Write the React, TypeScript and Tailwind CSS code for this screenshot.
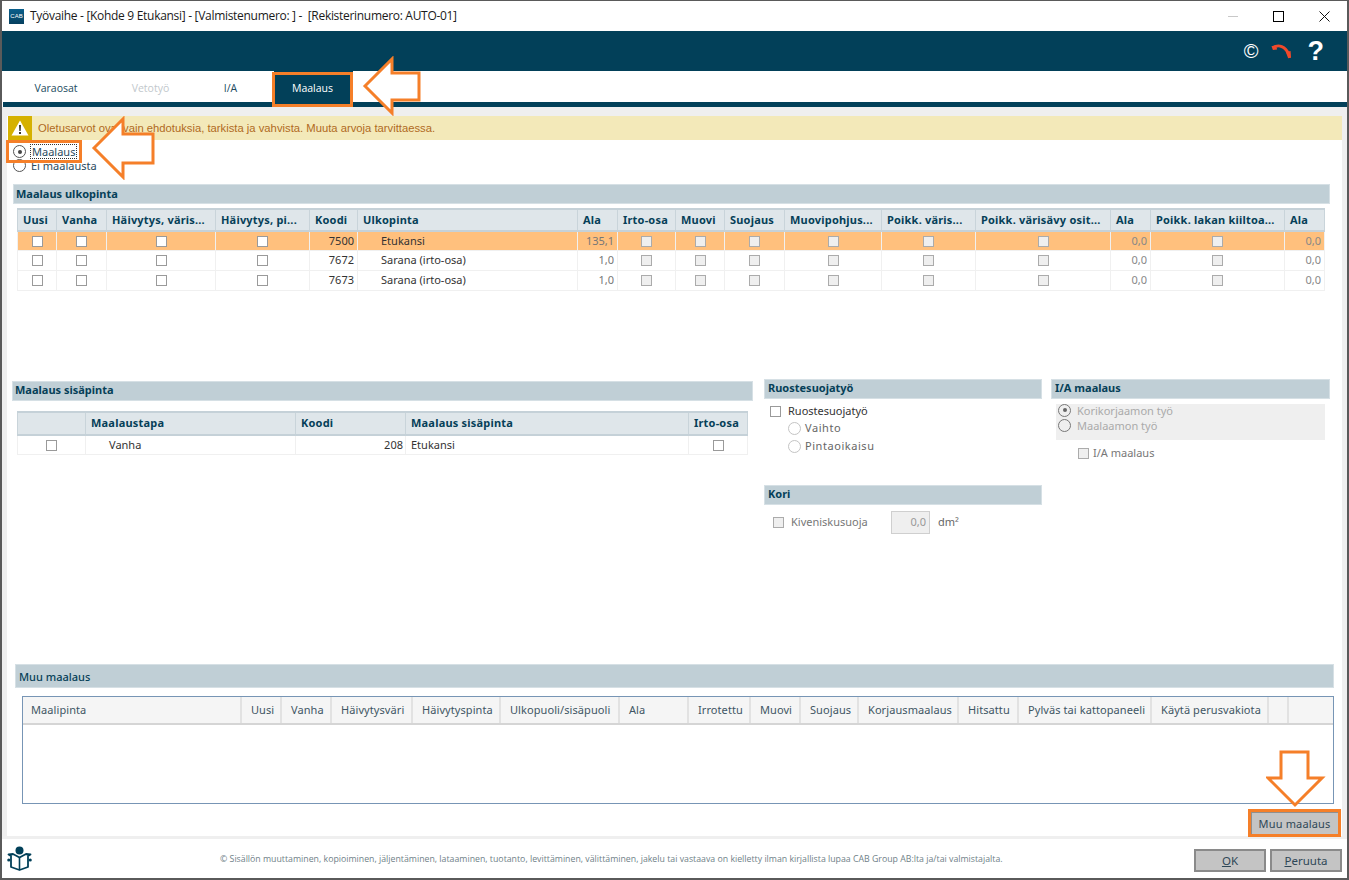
import React from "react";

const F = "font-['Noto_Sans',sans-serif]";

function Check({ disabled = false, cls = "" }: { disabled?: boolean; cls?: string }) {
  return <span className={`inline-block w-[11px] h-[11px] border align-middle ${disabled ? "bg-[#efefef] border-[#ababab]" : "bg-white border-[#9a9a9a]"} ${cls}`} />;
}

function Radio({ on = false, light = false, mid = false }: { on?: boolean; light?: boolean; mid?: boolean }) {
  return (
    <span className={`inline-flex items-center justify-center w-[13px] h-[13px] rounded-full border shrink-0 ${light ? "border-[#c4c4c4] bg-white" : mid ? "border-[#777]" : "border-[#555] bg-white"}`}>
      {on && <span className={`block w-[4px] h-[4px] rounded-full ${mid ? "bg-[#666]" : "bg-[#444]"}`} />}
    </span>
  );
}

function SectionHead({ children, cls = "" }: { children: React.ReactNode; cls?: string }) {
  return (
    <div className={`bg-[#c0cfd6] border border-[#d6e0e5] flex items-center pl-[2px] text-[11px] font-bold text-[#063f58] ${cls}`}>
      {children}
    </div>
  );
}

function Arrow({ cls, w, h, pts }: { cls: string; w: number; h: number; pts: string }) {
  return (
    <svg className={`absolute ${cls}`} width={w} height={h} viewBox={`0 0 ${w} ${h}`}>
      <polygon points={pts} fill="#ffffff" stroke="#f57f29" strokeWidth="3" strokeLinejoin="miter" />
    </svg>
  );
}

const th = "bg-[#dfe6ea] border-x border-x-[#c9d4da] border-y-2 border-y-[#c5d1d8] text-left font-bold text-[#063f58] pl-[5px] whitespace-nowrap overflow-hidden tracking-[0.2px]";
const td = "border border-[#f0f0f0] text-[#333333] p-0 text-center";
const tdn = "border border-[#f0f0f0] text-[#777777] pr-[3px] text-right";

const outerRows = [
  { k: "7500", n: "Etukansi", a: "135,1", hi: true },
  { k: "7672", n: "Sarana (irto-osa)", a: "1,0", hi: false },
  { k: "7673", n: "Sarana (irto-osa)", a: "1,0", hi: false },
];

const muuHead = ["Uusi", "Vanha", "Häivytysväri", "Häivytyspinta", "Ulkopuoli/sisäpuoli", "Ala", "Irrotettu", "Muovi", "Suojaus", "Korjausmaalaus", "Hitsattu", "Pylväs tai kattopaneeli", "Käytä perusvakiota", ""];

export default function App() {
  return (
    <div className={`relative w-[1349px] h-[880px] overflow-hidden bg-white flex flex-col border-x-2 border-b-2 border-t border-[#5a5a5a] ${F}`}>
      {/* title bar */}
      <div className="h-[30px] shrink-0 flex items-center pl-[7px] bg-white">
        <div className="w-[15px] h-[15px] bg-gradient-to-b from-[#0a5f8c] to-[#06405f] text-white text-[6px] leading-[15px] text-center font-['Liberation_Sans',sans-serif]">CAB</div>
        <span className="ml-[6px] text-[12px] text-[#1a1a1a] font-['Open_Sans',sans-serif] whitespace-pre tracking-[-0.3px]">Työvaihe - [Kohde 9 Etukansi] - [Valmistenumero: ] -  [Rekisterinumero: AUTO-01]</span>
        <div className="ml-auto flex items-center">
          <span className="block w-[10px] h-px bg-[#c8c8c8]" />
          <span className="block ml-[35px] w-[11px] h-[11px] border-[1.5px] border-black" />
          <svg className="ml-[35px] mr-[17px]" width="11" height="11" viewBox="0 0 11 11"><path d="M0.5 0.5 L10.5 10.5 M10.5 0.5 L0.5 10.5" stroke="#111" strokeWidth="1" /></svg>
        </div>
      </div>
      {/* blue bar */}
      <div className="h-10 shrink-0 bg-[#024059] flex items-center justify-end">
        <span className="text-white text-[20px] leading-none font-['Liberation_Sans',sans-serif]">©</span>
        <svg className="ml-[12px]" width="21" height="16" viewBox="0 0 22 16">
          <path d="M2 4.5 C8 0.5 15 3 19 12" fill="none" stroke="#f0492a" strokeWidth="3" />
          <path d="M0.5 3 L5 2 L6.5 6.5 L2 7 Z M15.5 9 L20.5 8 L21 15 L18 15.5 Z" fill="#f0492a" />
        </svg>
        <span className="ml-[16px] mr-[23px] text-white text-[27px] leading-none font-bold font-['Liberation_Sans',sans-serif]">?</span>
      </div>
      {/* tabs */}
      <div className="h-[31px] shrink-0 flex items-stretch text-[10.5px] text-[#204a5e] font-['Open_Sans',sans-serif]">
        <div className="w-[108px] flex items-center justify-center pt-[5px]">Varaosat</div>
        <div className="w-[81px] flex items-center justify-center pt-[5px] text-[#c2c8cc]">Vetotyö</div>
        <div className="w-[79px] flex items-center justify-center pt-[5px]">I/A</div>
        <div className="ml-[4px] w-[79px] flex items-center justify-center pt-[5px] pr-[2px] bg-[#024059] text-white">Maalaus</div>
      </div>
      <div className="h-[5px] shrink-0 bg-[#024059] ml-px" />
      {/* panel */}
      <div className="flex-1 min-h-0 bg-[#efefef] pt-[9px] pl-[5px] pr-[5px] pb-[3px] flex">
        <div className="flex-1 min-w-0 bg-white flex flex-col">
          <div className="ml-px h-[24px] shrink-0 bg-[#f3e9b9] flex items-center text-[11.25px] text-[#b06a1e] font-['Liberation_Sans',sans-serif]">
            <div className="w-[24px] h-[24px] bg-[#d5b100] flex items-center justify-center">
              <svg width="18" height="16" viewBox="0 0 18 16"><path d="M9 0.5 L17.5 15.5 H0.5 Z" fill="#fff" /><path d="M8 5 H10 L9.7 11 H8.3 Z M8 12 H10 V14 H8 Z" fill="#3a3a2a" /></svg>
            </div>
            <span className="ml-[6px]">Oletusarvot ovat vain ehdotuksia, tarkista ja vahvista. Muuta arvoja tarvittaessa.</span>
          </div>
          <div className="ml-[6px] mt-[4px] text-[11px] text-[#2a4a5e] leading-[15px]">
            <div className="flex items-center gap-[5px]"><Radio on /><span className="border border-dotted border-[#333] leading-[13px] px-px -ml-px">Maalaus</span></div>
            <div className="flex items-center gap-[5px] -mt-px"><Radio /><span>Ei maalausta</span></div>
          </div>
          {/* outer surface */}
          <SectionHead cls="ml-[6px] w-[1317px] h-[20px] mt-[11px] shrink-0">Maalaus ulkopinta</SectionHead>
          <table className="ml-[10px] mt-[4px] w-[1307px] table-fixed border-collapse text-[11px] shrink-0">
            <colgroup>
              <col className="w-[39px]" /><col className="w-[50px]" /><col className="w-[109px]" /><col className="w-[94px]" /><col className="w-[48px]" /><col className="w-[220px]" /><col className="w-[40px]" /><col className="w-[58px]" /><col className="w-[49px]" /><col className="w-[60px]" /><col className="w-[97px]" /><col className="w-[94px]" /><col className="w-[135px]" /><col className="w-[40px]" /><col className="w-[134px]" /><col className="w-[40px]" />
            </colgroup>
            <thead>
              <tr className="h-[22px]">
                {["Uusi", "Vanha", "Häivytys, väris...", "Häivytys, pi...", "Koodi", "Ulkopinta", "Ala", "Irto-osa", "Muovi", "Suojaus", "Muovipohjus...", "Poikk. väris...", "Poikk. värisävy osit...", "Ala", "Poikk. lakan kiiltoa...", "Ala"].map((h, i) => (
                  <th key={i} className={th}>{h}</th>
                ))}
              </tr>
            </thead>
            <tbody>
              {outerRows.map((r) => (
                <tr key={r.k} className={`${r.hi ? "h-[19px] bg-[#ffc07d]" : "h-[20px] bg-white"}`}>
                  <td className={td}><Check /></td>
                  <td className={td}><Check /></td>
                  <td className={td}><Check /></td>
                  <td className={td}><Check /></td>
                  <td className={`${tdn} !text-[#333333]`}>{r.k}</td>
                  <td className="border border-[#f0f0f0] text-[#333333] pl-[23px] text-left whitespace-nowrap">{r.n}</td>
                  <td className={tdn}>{r.a}</td>
                  <td className={td}><Check disabled /></td>
                  <td className={td}><Check disabled /></td>
                  <td className={td}><Check disabled /></td>
                  <td className={td}><Check disabled /></td>
                  <td className={td}><Check disabled /></td>
                  <td className={td}><Check disabled /></td>
                  <td className={`${tdn} !text-[#888888]`}>0,0</td>
                  <td className={td}><Check disabled /></td>
                  <td className={`${tdn} !text-[#888888]`}>0,0</td>
                </tr>
              ))}
            </tbody>
          </table>
          {/* three columns */}
          <div className="mt-[88px] flex items-start shrink-0 text-[11px]">
            <div className="ml-[5px] mt-[2px] w-[741px]">
              <SectionHead cls="h-[20px]">Maalaus sisäpinta</SectionHead>
              <table className="ml-[5px] mt-[10px] w-[730px] table-fixed border-collapse">
                <colgroup><col className="w-[68px]" /><col className="w-[210px]" /><col className="w-[110px]" /><col className="w-[283px]" /><col className="w-[59px]" /></colgroup>
                <thead>
                  <tr className="h-[23px]">
                    <th className={th}></th>
                    <th className={th}>Maalaustapa</th>
                    <th className={th}>Koodi</th>
                    <th className={th}>Maalaus sisäpinta</th>
                    <th className={th}>Irto-osa</th>
                  </tr>
                </thead>
                <tbody>
                  <tr className="h-[20px]">
                    <td className={td}><Check /></td>
                    <td className="border border-[#f0f0f0] text-[#333333] pl-[23px]">Vanha</td>
                    <td className={`${tdn} !text-[#333333] !pr-[2px]`}>208</td>
                    <td className="border border-[#f0f0f0] text-[#333333] pl-[5px]">Etukansi</td>
                    <td className={td}><Check /></td>
                  </tr>
                </tbody>
              </table>
            </div>
            <div className="ml-[11px] w-[278px]">
              <SectionHead cls="h-[20px] pl-[3px]">Ruostesuojatyö</SectionHead>
              <div className="mt-[6px] ml-[6px] flex items-center h-[13px] text-[#333333]"><Check /><span className="ml-[7px]">Ruostesuojatyö</span></div>
              <div className="mt-[4px] ml-[24px] flex items-center h-[14px] text-[#666666] tracking-[0.55px]"><Radio light /><span className="ml-[4px]">Vaihto</span></div>
              <div className="mt-[4px] ml-[24px] flex items-center h-[14px] text-[#666666] tracking-[0.55px]"><Radio light /><span className="ml-[4px]">Pintaoikaisu</span></div>
              <SectionHead cls="h-[20px] mt-[31px] pl-[3px]">Kori</SectionHead>
              <div className="mt-[6px] ml-[9px] flex items-center h-[23px] text-[#777777]">
                <Check disabled />
                <span className="ml-[7px] w-[100px]">Kiveniskusuoja</span>
                <span className="w-[39px] h-[23px] bg-[#efefef] border border-[#cfcfcf] flex items-center justify-end pr-[3px] text-[#999999]">0,0</span>
                <span className="ml-[8px] text-[#666666]">dm²</span>
              </div>
            </div>
            <div className="ml-[9px] w-[279px]">
              <SectionHead cls="h-[20px] pl-[3px]">I/A maalaus</SectionHead>
              <div className="mt-[5px] ml-[5px] w-[269px] h-[36px] bg-[#efefef] pl-[2px] text-[#aaaaaa] leading-[15px]">
                <div className="flex items-center gap-[6px] -translate-y-px"><Radio on mid /><span>Korikorjaamon työ</span></div>
                <div className="flex items-center gap-[6px] -translate-y-px"><Radio mid /><span>Maalaamon työ</span></div>
              </div>
              <div className="mt-[7px] ml-[27px] flex items-center h-[13px] text-[#777777]"><Check disabled /><span className="ml-[4px]">I/A maalaus</span></div>
            </div>
          </div>
          {/* muu maalaus */}
          <div className="mt-auto shrink-0">
            <SectionHead cls="ml-[8px] w-[1319px] h-[24px] pl-[3px] pt-[2px] !font-medium">Muu maalaus</SectionHead>
            <div className="ml-[15px] mt-[8px] w-[1312px] h-[108px] border border-[#7795b5] text-[11px] text-[#3f5564] tracking-[0.08px]">
              <div className="flex h-[28px] bg-[#f5f5f5] border-b-2 border-[#d5d5d5] items-center">
                <div className="w-[219px] h-full flex items-center pl-[8px] border-r-2 border-[#e2e2e2]">Maalipinta</div>
                <div className="flex h-full">
                  {muuHead.map((h, i) => (
                    <div key={i} className={`h-full flex items-center pl-[9px] whitespace-nowrap border-r-2 border-[#e2e2e2] ${["w-[40px]", "w-[50px]", "w-[81px]", "w-[88px]", "w-[119px]", "w-[69px]", "w-[62px]", "w-[50px]", "w-[58px]", "w-[100px]", "w-[60px]", "w-[133px]", "w-[117px]", "w-[20px]"][i]}`}>{h}</div>
                  ))}
                </div>
              </div>
            </div>
            <div className="flex justify-end mt-[8px] mr-[2px]">
              <button className="w-[89px] h-[24px] bg-[#c4c4c4] border border-[#8f8f8f] pr-[2px] text-[11px] text-[#2f4756] tracking-[0.15px]">Muu maalaus</button>
            </div>
          </div>
        </div>
      </div>
      {/* footer */}
      <div className="h-[39px] shrink-0 flex items-center relative">
        <svg className="ml-[5px]" width="25" height="25" viewBox="0 0 25 25" fill="none">
          <circle cx="12.5" cy="4.5" r="4" fill="#024059" />
          <path d="M1.5 8.5 L6 8 L12.5 11.5 L19 8 L23.5 8.5 L21 10 L21 21 L12.5 24 L4 21 L4 10 Z" stroke="#024059" strokeWidth="1.8" strokeLinejoin="round" />
          <path d="M12.5 11.5 V24" stroke="#024059" strokeWidth="1.6" />
          <circle cx="1.8" cy="14" r="1.6" fill="#024059" /><circle cx="23.2" cy="14" r="1.6" fill="#024059" />
        </svg>
        <div className="ml-[188px] pt-[3px] text-[8.78px] text-[#6f7f88] font-['Open_Sans',sans-serif] whitespace-nowrap">© Sisällön muuttaminen, kopioiminen, jäljentäminen, lataaminen, tuotanto, levittäminen, välittäminen, jakelu tai vastaava on kielletty ilman kirjallista lupaa CAB Group AB:lta ja/tai valmistajalta.</div>
        <div className="absolute right-[5px] top-[10px] flex gap-[4px] text-[11.5px] text-[#2f4756]">
          <button className="w-[72px] h-[23px] bg-[#c4c4c4] border-2 border-[#8a8a8a]"><span className="underline">O</span>K</button>
          <button className="w-[72px] h-[23px] bg-[#c4c4c4] border-2 border-[#8a8a8a]"><span className="underline">P</span>eruuta</button>
        </div>
      </div>

      {/* annotations over the page */}
      <div className="absolute left-[270px] top-[71px] w-[81px] h-[35px] border-[3px] border-[#f57f29]" />
      <div className="absolute left-[4px] top-[139px] w-[76px] h-[23px] border-[3px] border-[#f57f29]" />
      <div className="absolute left-[1246px] top-[808px] w-[93px] h-[28px] border-[3px] border-[#f57f29]" />
      <Arrow cls="left-[360px] top-[55px]" w={62} h={60} pts="3,30 30,3 30,17 57,17 57,44 30,44 30,57" />
      <Arrow cls="left-[89px] top-[115px]" w={66} h={64} pts="3,32 32,3 32,18 62,18 62,47 32,47 32,61" />
      <Arrow cls="left-[1264px] top-[749px]" w={60} h={58} pts="15,2 42,2 42,28 56,28 29,55 2,28 15,28" />
    </div>
  );
}
